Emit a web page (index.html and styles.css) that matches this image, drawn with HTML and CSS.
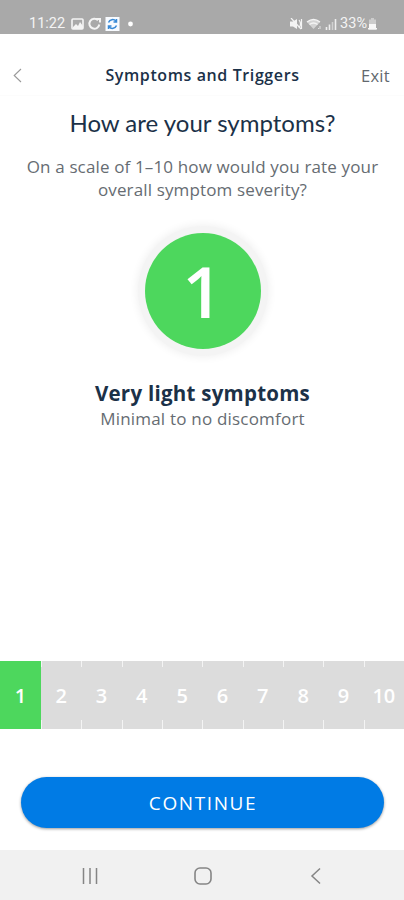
FILE: index.html
```html
<!DOCTYPE html>
<html lang="en">
<head>
<meta charset="utf-8">
<title>Symptoms and Triggers</title>
<link rel="stylesheet" href="styles.css">
</head>
<body>
<div class="status">
  <span class="time">11:22</span>
  <svg class="s-left" width="66" height="14" viewBox="0 0 66 14" fill="none">
    <rect x="1" y="2" width="11" height="10" rx="1" stroke="#f4f4f4" stroke-width="1.6"/>
    <path d="M2 10l3-3 2 2 2-4 3 4v3H2z" fill="#f4f4f4"/>
    <path d="M27 3.200A5 5 0 1 0 28.300 7.500M24 2h5v3.500" stroke="#f4f4f4" stroke-width="2"/>
    <rect x="34.500" y="0" width="14" height="14" fill="#f8fbff"/>
    <path d="M37.500 5.500a4.400 4.400 0 0 1 7.500-1.300M45.500 8.500a4.400 4.400 0 0 1-7.500 1.300M45.500 2v3h-3M37.500 12V9h3" stroke="#398ad6" stroke-width="1.500"/>
    <circle cx="59.500" cy="7" r="2.400" fill="#fff"/>
  </svg>
  <svg class="s-right" width="48" height="12" viewBox="0 0 48 12" fill="none">
    <path d="M0 3.500h3L7 1v10L3 8.500H0z" fill="#f4f4f4"/>
    <path d="M1 0l10 11M9 2q3 4 0 8M11.500 1v10" stroke="#f4f4f4" stroke-width="1.200"/>
    <path d="M17 4q6.500-5 13 0l-6.500 7z" fill="#d4d4d4"/>
    <path d="M17 4q6.500-5 13 0M19.500 6.500q4-3 8 0" stroke="#f4f4f4" stroke-width="1.400"/>
    <path d="M30 8v3M28 10.500h1" stroke="#e4e4e4"/>
    <path d="M36.500 9v3M39.500 6.500V12" stroke="#eee" stroke-width="1.600"/>
    <path d="M42.500 4v8" stroke="#d0d0d0" stroke-width="1.600"/>
    <path d="M45.500 1v11" stroke="#eee" stroke-width="1.600"/>
  </svg>
  <span class="pct">33%</span>
  <svg class="batt" width="9" height="12" viewBox="0 0 9 12"><path d="M3 0h3v1.500h2V12H1V1.500h2z" fill="#ccc"/><path d="M1 6h7v4H1zM0 10h9v1.500H0z" fill="#f8f8f8"/></svg>
</div>
<header class="bar">
  <svg class="back" width="9" height="15" viewBox="0 0 9 15"><path d="M8 1L1.200 7.500 8 14" fill="none" stroke="#999" stroke-width="1.100"/></svg>
  <span class="bar-title">Symptoms and Triggers</span>
  <span class="exit">Exit</span>
</header>
<main class="content">
  <h1 class="question">How are your symptoms?</h1>
  <p class="hint">On a scale of 1–10 how would you rate your<br>overall symptom severity?</p>
  <div class="score">1</div>
  <h2 class="level">Very light symptoms</h2>
  <p class="desc">Minimal to no discomfort</p>
</main>
<div class="scale">
  <div class="step on">1</div><div class="step">2</div><div class="step">3</div><div class="step">4</div><div class="step">5</div><div class="step">6</div><div class="step">7</div><div class="step">8</div><div class="step">9</div><div class="step">10</div>
</div>
<div class="action"><button class="continue">CONTINUE</button></div>
<nav class="nav">
  <svg width="18" height="18" viewBox="0 0 18 18"><path d="M2.500 1v16M9 1v16M15.500 1v16" stroke="#858585" stroke-width="1.500"/></svg>
  <svg width="18" height="18" viewBox="0 0 18 18"><rect x="1" y="1" width="16" height="16" rx="5" fill="none" stroke="#858585" stroke-width="1.600"/></svg>
  <svg width="18" height="18" viewBox="0 0 18 18"><path d="M13 1.500L5 9l8 7.500" fill="none" stroke="#858585" stroke-width="1.500"/></svg>
</nav>
</body>
</html>
```
FILE: styles.css
```css
* { box-sizing: border-box; }
body {
  margin: 0;
  width: 404px;
  height: 900px;
  display: flex;
  flex-direction: column;
  overflow: hidden;
  background: #fff;
  color: #1b3148;
  font-family: "Open Sans", sans-serif;
}
h1, h2, p { margin: 0; font-weight: 400; }
svg { display: block; flex: none; }
.status {
  height: 34px;
  padding: 13px 27px 0 29px;
  display: flex;
  align-items: center;
  background: #a9a9a9;
  color: #f4f4f4;
  font: 14.5px/22px Roboto, sans-serif;
}
.time { width: 42px; }
.s-right { margin-left: auto; }
.pct { margin-left: 2px; font-size: 14.5px; }
.batt { margin-left: 1px; }
.bar {
  height: 62px;
  padding: 20px 14px 0 13px;
  display: grid;
  grid-template-columns: 50px 1fr 48px;
  align-items: center;
  align-content: start;
  border-bottom: 1px solid #fcfcfc;
}
.bar-title {
  height: 42px;
  text-align: center;
  font-size: 16px;
  line-height: 42px;
  font-weight: 600;
  letter-spacing: .6px;
  white-space: nowrap;
}
.exit { text-align: right; font-size: 16.5px; letter-spacing: .3px; color: #62686e; }
.content { flex: 1; display: flex; flex-direction: column; align-items: center; padding-left: 1px; text-align: center; }
.question { margin-top: 12px; font: 24px/30px Lato, sans-serif; white-space: nowrap; }
.hint { margin-top: 17px; font-size: 17px; line-height: 23px; letter-spacing: .14px; color: #666c72; white-space: nowrap; }
.score {
  width: 116px;
  height: 116px;
  margin-top: 32px;
  border-radius: 50%;
  background: #4dd75d;
  box-shadow: 0 0 0 7px #f4f4f4, 0 0 8px 8px #f0f0f0;
  display: flex;
  align-items: center;
  justify-content: center;
  padding-bottom: 1px;
  color: #fff;
  font-size: 71px;
  line-height: 100px;
  font-weight: 600;
}
.level { margin-top: 30px; font-size: 20.5px; line-height: 28px; font-weight: 700; letter-spacing: .25px; }
.desc { font-size: 17px; line-height: 24px; letter-spacing: .2px; color: #666c72; }
.scale { height: 68px; display: grid; grid-template-columns: 41px repeat(9, 1fr); background: #dcdcdc; }
.step {
  display: flex;
  align-items: center;
  justify-content: center;
  padding-top: 1px;
  color: #fff;
  font-size: 20px;
  font-weight: 600;
  background: linear-gradient(#f4f4f4, #f4f4f4) left top / 1px 6px no-repeat, linear-gradient(#f4f4f4, #f4f4f4) left bottom / 1px 9px no-repeat;
}
.step.on { background: #4dd75d; }
.action { height: 121px; padding: 48px 20px 0 21px; }
.continue {
  display: block;
  width: 363px;
  height: 51px;
  padding: 0 0 0 1px;
  border: 0;
  border-radius: 26px;
  background: #007be5;
  color: #fff;
  box-shadow: 0 1px 3px rgba(0, 0, 0, .4);
  font: 500 19px/52px "Open Sans", sans-serif;
  letter-spacing: 1.6px;
}
.nav { height: 50px; padding: 2px 79px 0 81px; display: flex; align-items: center; justify-content: space-between; background: #f1f1f1; }
```
